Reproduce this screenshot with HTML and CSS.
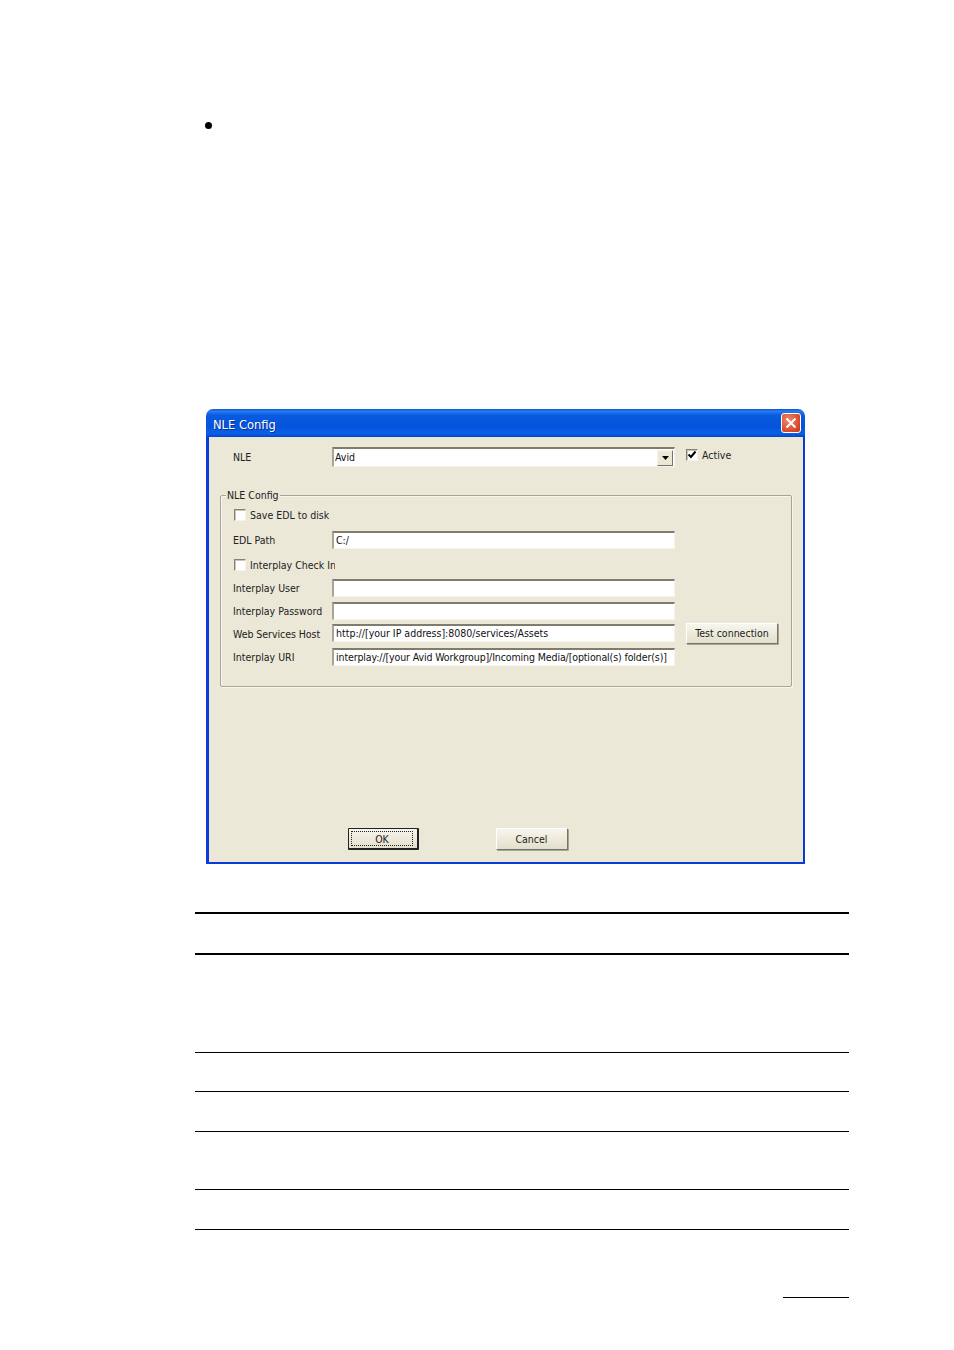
FILE: index.html
```html
<!DOCTYPE html>
<html lang="en">
<head>
<meta charset="utf-8">
<title>NLE Config</title>
<link rel="stylesheet" href="styles.css">
</head>
<body>
<div class="bullet"></div>
<section class="dialog">
  <header class="titlebar">
    <span class="title">NLE Config</span>
    <span class="close"><svg viewBox="0 0 12 12" width="12" height="12"><path d="M1.5 1.5 10.5 10.5M10.5 1.5 1.5 10.5" stroke="#fff" stroke-width="2" fill="none"/></svg></span>
  </header>
  <div class="client">
    <div class="row top">
      <span class="label">NLE</span>
      <div class="combo"><span>Avid</span><span class="drop"><svg viewBox="0 0 7 4" width="7" height="4"><path d="M0 0H7L3.5 4Z" fill="#000"/></svg></span></div>
      <span class="check active"><svg viewBox="0 0 10 10" width="10" height="10"><path d="M1.5 4.5 4 7 8.5 1.5" stroke="#000" stroke-width="2" fill="none"/></svg></span>
      <span class="check-label">Active</span>
    </div>
    <div class="group">
      <span class="legend">NLE Config</span>
      <div class="row r1"><span class="check"></span><span>Save EDL to disk</span></div>
      <div class="row r2"><span class="label">EDL Path</span><div class="field">C:/</div></div>
      <div class="row r3"><span class="check"></span><span class="clip">Interplay Check In</span></div>
      <div class="row r4"><span class="label">Interplay User</span><div class="field"></div></div>
      <div class="row r5"><span class="label">Interplay Password</span><div class="field"></div></div>
      <div class="row r6"><span class="label">Web Services Host</span><div class="field">http://[your IP address]:8080/services/Assets</div><button class="btn test">Test connection</button></div>
      <div class="row r7"><span class="label">Interplay URI</span><div class="field">interplay://[your Avid Workgroup]/Incoming Media/[optional(s) folder(s)]</div></div>
    </div>
    <div class="actions">
      <button class="btn ok"><span class="focus">OK</span></button>
      <button class="btn cancel">Cancel</button>
    </div>
  </div>
</section>
<div class="rules">
  <div class="rule head"></div>
  <div class="rule r98"></div>
  <div class="rule r39"></div>
  <div class="rule r40"></div>
  <div class="rule r58"></div>
  <div class="rule r40"></div>
</div>
<div class="footer-rule"></div>
</body>
</html>
```
FILE: styles.css
```css
* { box-sizing: border-box; }
html, body { margin: 0; background: #fff; }
body { width: 954px; height: 1350px; overflow: hidden; padding-top: 122px; font: 10.5px "DejaVu Sans", sans-serif; font-stretch: condensed; color: #222; }
.bullet { width: 7px; height: 7px; margin-left: 205px; border-radius: 50%; background: #000; }
.dialog { width: 599px; height: 455px; margin: 280px 0 0 206px; display: flex; flex-direction: column; }
.titlebar { height: 28px; flex: none; display: flex; align-items: center; justify-content: space-between; padding: 0 4px 0 7px; border-radius: 7px 7px 0 0; background: linear-gradient(#0a55d8 0, #2a7cf0 8%, #0a5be0 22%, #0553da 60%, #0a5fe8 88%, #0444c8 100%); }
.title { color: #fff; font-size: 12.8px; font-weight: 500; padding-top: 3px; text-shadow: 1px 1px 0 #0a2f9a; }
.close { width: 20px; height: 20px; display: flex; align-items: center; justify-content: center; border: 1px solid #fff; border-radius: 3px; background: radial-gradient(circle at 35% 35%, #ee8a68, #d8482a 70%, #c23a1e); }
.client { flex: 1; padding-top: 10px; background: #ebe8d8; border: solid #0a3ad8; border-width: 0 2px 2px 3px; }
.row { display: flex; align-items: center; height: 18px; white-space: nowrap; }
.row.top { height: 20px; padding-left: 24px; }
.label { width: 99px; flex: none; }
.field, .combo { width: 343px; height: 18px; flex: none; display: flex; align-items: center; padding: 0 0 2px 2px; background: #fff; border-style: solid; border-width: 2px 1px 1px 2px; border-color: #7f7c6e #f6f4ea #f6f4ea #a8a596; color: #111; }
.combo { height: 20px; padding: 0 1px 0 1px; justify-content: space-between; }
.combo > span:first-child { padding-bottom: 2px; }
.drop { width: 16px; height: 16px; display: flex; align-items: center; justify-content: center; background: #ebe8d8; border: 1px solid; border-color: #f6f4ea #77746a #77746a #f6f4ea; }
.check { width: 12px; height: 12px; flex: none; margin: 0 4px 0 1px; display: flex; align-items: center; justify-content: center; background: #fff; border: 1px solid; border-color: #85826f #f6f4ea #f6f4ea #85826f; box-shadow: inset 1px 1px 0 #c9c6b6; }
.check.active { margin: -5px 4px 0 11px; }
.check-label { margin-top: -4px; }
.clip { width: 85px; overflow: hidden; }
.group { position: relative; width: 572px; height: 192px; margin: 28px 0 0 11px; padding: 10px 12px 0; border: 1px solid #a7a595; border-radius: 2px; box-shadow: inset 1px 1px 0 #f8f7ef, 1px 1px 0 #f8f7ef; }
.legend { position: absolute; top: -7px; left: 5px; padding: 0 1px; background: #ebe8d8; line-height: 13px; }
.r2 { margin-top: 7px; }
.r3 { margin-top: 7px; }
.r4, .r5 { margin-top: 5px; }
.r6 { margin-top: 4px; }
.r6 .label { padding-top: 2px; letter-spacing: -0.05px; }
.r7 { margin-top: 6px; }
.r7 .field { letter-spacing: -0.11px; }
.btn { height: 21px; padding: 0; font: inherit; color: #222; background: linear-gradient(#f7f6ee, #ebe8d8 60%, #e2dfcd); border: 1px solid; border-color: #fff #77746a #77746a #fff; border-radius: 1px; box-shadow: 1px 1px 0 #a8a596; }
.test { width: 92px; margin-left: 11px; flex: none; }
.actions { display: flex; margin: 141px 0 0 139px; }
.actions .btn { height: 22px; }
.ok { width: 71px; padding: 2px 4px 2px 2px; border-color: #222; border-width: 1px 2px 2px 1px; box-shadow: none; }
.focus { display: block; height: 100%; line-height: 15px; border: 1px dotted #222; }
.cancel { width: 72px; margin-left: 77px; padding-right: 1px; }
.rules { width: 654px; margin: 48px 0 0 195px; }
.rule { border-bottom: 1px solid #000; }
.head { height: 43px; border-top: 2px solid #000; border-bottom-width: 2px; }
.r98 { height: 98px; }
.r39 { height: 39px; }
.r40 { height: 40px; }
.r58 { height: 58px; }
.footer-rule { width: 66px; height: 1px; margin: 67px 0 0 783px; background: #000; }
```
